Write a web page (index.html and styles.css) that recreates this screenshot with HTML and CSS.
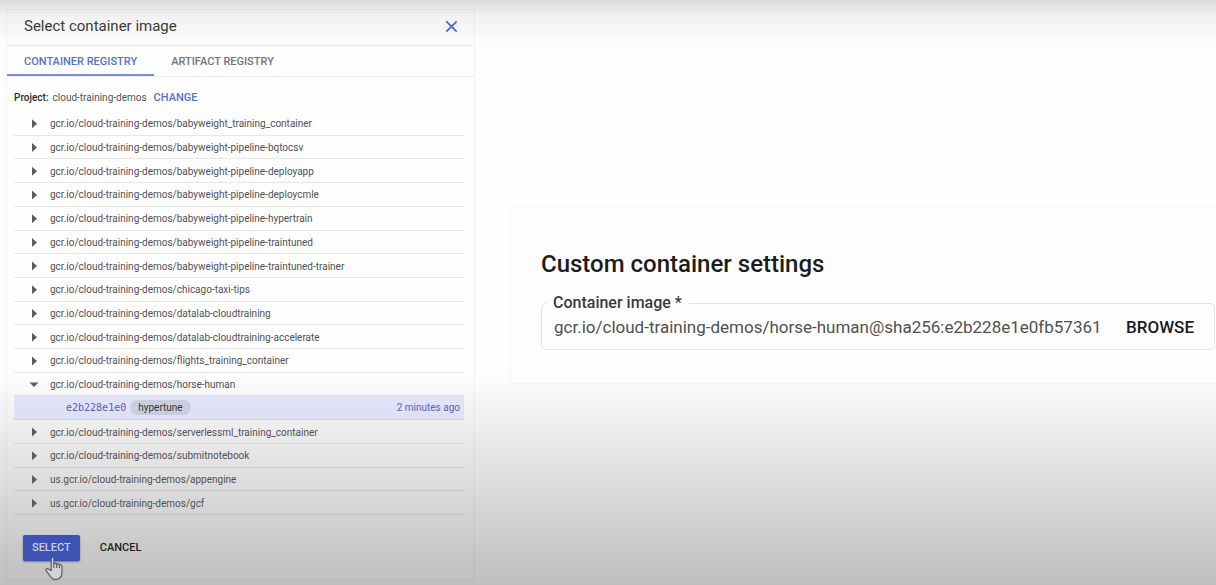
FILE: index.html
```html
<!DOCTYPE html>
<html lang="en">
<head>
<meta charset="utf-8">
<title>Select container image</title>
<link rel="stylesheet" href="styles.css">
</head>
<body>
<main class="page">
  <section class="picker" aria-labelledby="picker-title">
    <header class="picker-header">
      <h1 class="picker-title" id="picker-title">Select container image</h1>
      <button class="close" type="button" aria-label="Close">
        <svg width="13" height="13" viewBox="0 0 13 13" aria-hidden="true"><path d="M1.3 1.3 11.7 11.7M11.7 1.3 1.3 11.7" fill="none" stroke="currentColor" stroke-width="1.7"/></svg>
      </button>
    </header>
    <nav class="tabs">
      <button class="tab tab-active" type="button">CONTAINER REGISTRY</button>
      <button class="tab" type="button">ARTIFACT REGISTRY</button>
    </nav>
    <p class="project"><strong class="project-label">Project:</strong> <span>cloud-training-demos</span> <button class="change" type="button">CHANGE</button></p>
    <ul class="images">
      <li class="image"><button class="image-toggle" type="button"><span class="arrow"></span>gcr.io/cloud-training-demos/babyweight_training_container</button></li>
      <li class="image"><button class="image-toggle" type="button"><span class="arrow"></span>gcr.io/cloud-training-demos/babyweight-pipeline-bqtocsv</button></li>
      <li class="image"><button class="image-toggle" type="button"><span class="arrow"></span>gcr.io/cloud-training-demos/babyweight-pipeline-deployapp</button></li>
      <li class="image"><button class="image-toggle" type="button"><span class="arrow"></span>gcr.io/cloud-training-demos/babyweight-pipeline-deploycmle</button></li>
      <li class="image"><button class="image-toggle" type="button"><span class="arrow"></span>gcr.io/cloud-training-demos/babyweight-pipeline-hypertrain</button></li>
      <li class="image"><button class="image-toggle" type="button"><span class="arrow"></span>gcr.io/cloud-training-demos/babyweight-pipeline-traintuned</button></li>
      <li class="image"><button class="image-toggle" type="button"><span class="arrow"></span>gcr.io/cloud-training-demos/babyweight-pipeline-traintuned-trainer</button></li>
      <li class="image"><button class="image-toggle" type="button"><span class="arrow"></span>gcr.io/cloud-training-demos/chicago-taxi-tips</button></li>
      <li class="image"><button class="image-toggle" type="button"><span class="arrow"></span>gcr.io/cloud-training-demos/datalab-cloudtraining</button></li>
      <li class="image"><button class="image-toggle" type="button"><span class="arrow"></span>gcr.io/cloud-training-demos/datalab-cloudtraining-accelerate</button></li>
      <li class="image"><button class="image-toggle" type="button"><span class="arrow"></span>gcr.io/cloud-training-demos/flights_training_container</button></li>
      <li class="image"><button class="image-toggle" type="button" aria-expanded="true"><span class="arrow arrow-open"></span>gcr.io/cloud-training-demos/horse-human</button></li>
      <li class="image version"><span class="digest">e2b228e1e0</span><span class="tag">hypertune</span><span class="age">2 minutes ago</span></li>
      <li class="image"><button class="image-toggle" type="button"><span class="arrow"></span>gcr.io/cloud-training-demos/serverlessml_training_container</button></li>
      <li class="image"><button class="image-toggle" type="button"><span class="arrow"></span>gcr.io/cloud-training-demos/submitnotebook</button></li>
      <li class="image"><button class="image-toggle" type="button"><span class="arrow"></span>us.gcr.io/cloud-training-demos/appengine</button></li>
      <li class="image"><button class="image-toggle" type="button"><span class="arrow"></span>us.gcr.io/cloud-training-demos/gcf</button></li>
    </ul>
    <footer class="actions">
      <button class="select" type="button">SELECT
        <svg class="pointer" width="19" height="25" viewBox="0 0 19 25" aria-hidden="true"><path d="M6.2 14.6V2.6C6.2.6 8.9.6 8.9 2.6V8c.5-1.300 2.700-1 2.800.5.6-1 2.500-.8 2.700.7.8-.8 2.600-.4 2.600 1.300v5.500c0 4.500-2.300 7.500-6.300 7.500-3.300 0-4.700-1.600-6-4L1.200 14.800c-.9-1.700 1-2.700 2.300-1.700z" fill="#d2d2d2" stroke="#555" stroke-width="1.1" stroke-linejoin="round"/><path d="M8.900 8v4M11.700 8.500V12M14.400 9.200V12" fill="none" stroke="#555" stroke-width="1.100"/></svg>
      </button>
      <button class="cancel" type="button">CANCEL</button>
    </footer>
  </section>
  <section class="settings">
    <h2 class="settings-title">Custom container settings</h2>
    <fieldset class="field">
      <legend class="field-legend"><label for="container-image">Container image *</label></legend>
      <input class="field-input" id="container-image" type="text" value="gcr.io/cloud-training-demos/horse-human@sha256:e2b228e1e0fb57361">
      <button class="browse" type="button">BROWSE</button>
    </fieldset>
  </section>
</main>
</body>
</html>
```
FILE: styles.css
```css
* { box-sizing: border-box; }

body {
  margin: 0;
  font-family: Roboto, sans-serif;
  color: #505154;
}

button {
  margin: 0;
  padding: 0;
  border: 0;
  background: none;
  font: inherit;
  color: inherit;
}

.page {
  display: flex;
  align-items: flex-start;
  gap: 35px;
  min-height: 100vh;
  padding-left: 6px;
  background:
    linear-gradient(to bottom, rgba(0, 0, 0, .14), rgba(0, 0, 0, .05) 16px, rgba(0, 0, 0, .01) 40px, transparent 60px),
    linear-gradient(to top, rgba(0, 0, 0, .25), transparent 215px),
    #fefefe;
}

.picker {
  display: flex;
  flex-direction: column;
  flex: 0 0 469px;
  min-height: calc(100vh - 13px);
  margin: 9px 0 4px;
  border: 1px solid rgba(0, 0, 0, .04);
}

.picker-header {
  display: flex;
  align-items: center;
  justify-content: space-between;
  height: 36px;
  padding: 0 16px 3px 17px;
  border-bottom: 1px solid rgba(0, 0, 0, .07);
}

.picker-title {
  margin: 0;
  font-size: 15px;
  font-weight: 400;
  color: #3a3a3a;
}

.close { display: flex; color: #4a66cc; }

.tabs {
  display: flex;
  height: 31px;
  border-bottom: 1px solid rgba(0, 0, 0, .08);
}

.tab {
  padding: 0 17px;
  font-size: 11px;
  font-weight: 500;
  color: #737578;
}

.tab-active {
  color: #5570d2;
  box-shadow: inset 0 -2px #7b8edb;
}

.project {
  display: flex;
  align-items: center;
  gap: 4px;
  height: 35px;
  margin: 0;
  padding: 5px 7px 0;
  font-size: 10px;
}

.project-label { font-weight: 500; color: #2c2c2c; }

.change {
  margin-left: 3px;
  font-size: 11px;
  font-weight: 500;
  color: #5570d2;
}

.images {
  display: grid;
  flex: 1;
  grid-auto-rows: 1fr;
  margin: 0 10px 0 7px;
  padding: 0;
  list-style: none;
  font-size: 10px;
}

.image {
  display: flex;
  border-bottom: 1px solid rgba(0, 0, 0, .09);
}

.image-toggle {
  display: flex;
  align-items: center;
  flex: 1;
  gap: 11px;
  padding: 1px 0 0 15px;
  text-align: left;
}

.arrow {
  width: 10px;
  height: 10px;
  background: #5c5c5c;
  clip-path: polygon(30% 5%, 80% 50%, 30% 95%);
}

.arrow-open { clip-path: polygon(5% 30%, 95% 30%, 50% 75%); }

.version {
  align-items: center;
  padding: 0 4px 0 52px;
  background: rgba(200, 206, 250, .45);
  color: #5a60b4;
}

.digest { font-family: "DejaVu Sans Mono", monospace; }

.tag {
  margin-left: 4px;
  padding: 2px 8px;
  border-radius: 8px;
  background: rgba(0, 0, 0, .09);
  color: #333;
}

.age { margin-left: auto; }

.actions {
  display: flex;
  align-items: center;
  gap: 20px;
  height: 65px;
  padding-left: 16px;
  font-size: 11px;
  font-weight: 500;
  color: #222;
}

.select {
  position: relative;
  height: 26px;
  padding: 0 9px;
  border-radius: 2px;
  background: #3d53b4;
  box-shadow: 0 1px 2px rgba(0, 0, 0, .4);
  color: #c8cee6;
}

.pointer {
  position: absolute;
  left: 22px;
  top: 21px;
}

.settings {
  flex: 1;
  min-width: 0;
  margin-top: 206px;
  padding: 41px 1px 33px 30px;
  border: 1px solid rgba(0, 0, 0, .03);
  border-right: 0;
}

.settings-title {
  margin: 0;
  font-size: 24px;
  line-height: 32px;
  font-weight: 500;
  color: #1c1c1c;
}

.field {
  display: flex;
  align-items: center;
  margin: 13px 0 0;
  padding: 0 20px 0 4px;
  border: 1px solid #e2e2e2;
  border-radius: 5px;
}

.field-legend {
  padding: 0 7px;
  font-size: 16px;
  line-height: 20px;
  font-weight: 500;
  color: #3a3a3a;
}

.field-input {
  flex: 1;
  min-width: 0;
  height: 36px;
  margin: 0 27px 0 8px;
  padding: 0 0 9px;
  border: 0;
  outline: 0;
  background: none;
  font: 400 17px Roboto, sans-serif;
  color: #505050;
}

.browse {
  padding-bottom: 9px;
  font-size: 17px;
  font-weight: 500;
  color: #1a1a1a;
}
```
